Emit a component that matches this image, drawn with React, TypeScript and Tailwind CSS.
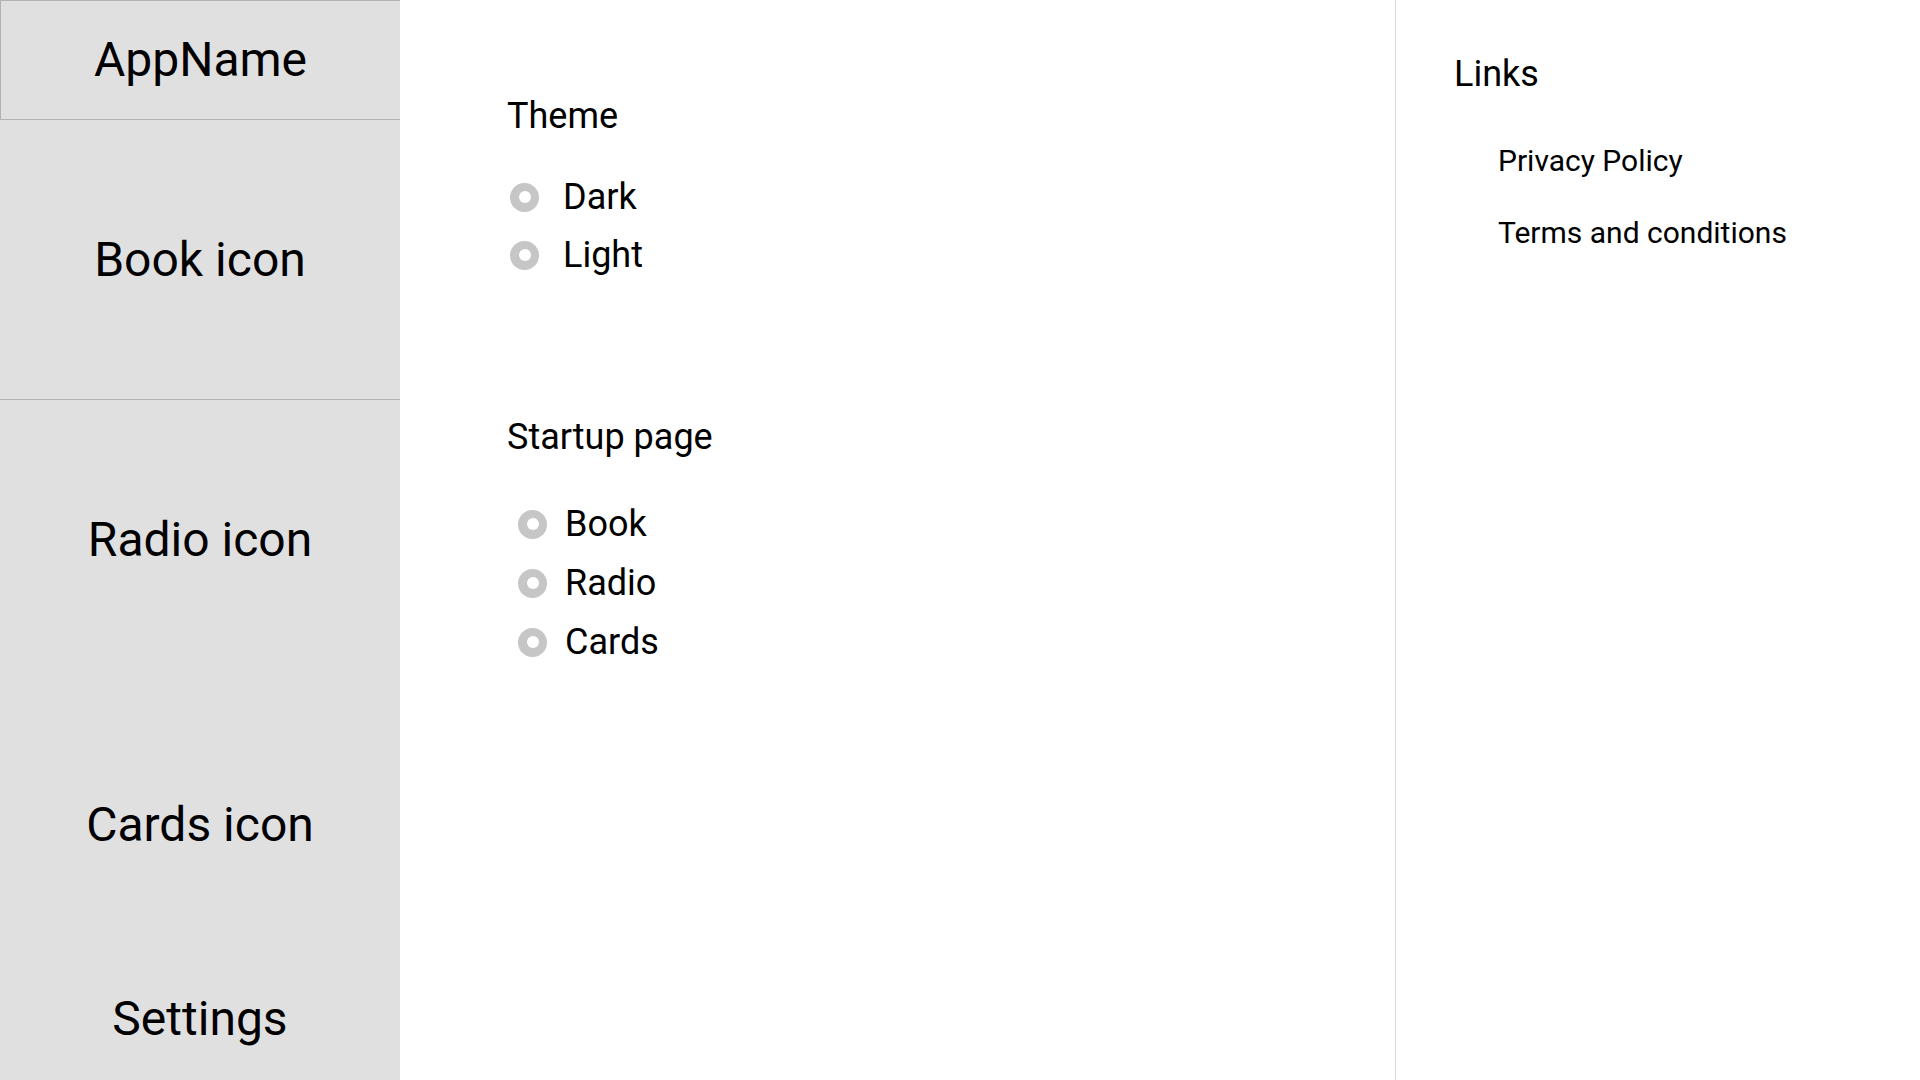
const radioCls = 'flex h-[29px] w-[29px] items-center justify-center rounded-full bg-[#c6c6c6]';

function RadioDot() {
  return (
    <span className={radioCls}>
      <span className="h-[12px] w-[12px] rounded-full bg-white" />
    </span>
  );
}

function Option({ label, indent, gap }: { label: string; indent: string; gap: string }) {
  return (
    <label className={`flex h-[36px] items-center ${indent}`}>
      <RadioDot />
      <span className={`${gap} text-[36px] leading-none`}>{label}</span>
    </label>
  );
}

export default function App() {
  return (
    <div className="flex h-[1080px] w-[1920px] overflow-hidden bg-white text-black font-['Roboto','Liberation_Sans',sans-serif]">
      {/* sidebar */}
      <nav className="flex w-[400px] shrink-0 flex-col bg-[#e0e0e0] text-[48px] leading-none">
        <div className="flex h-[120px] items-center justify-center border-t border-l border-b border-[#b3b3b3]">
          AppName
        </div>
        <div className="flex h-[280px] items-center justify-center border-b border-[#b3b3b3]">Book icon</div>
        <div className="flex h-[280px] items-center justify-center">Radio icon</div>
        <div className="flex h-[290px] items-center justify-center">Cards icon</div>
        <div className="flex flex-1 justify-center pt-[25px]">Settings</div>
      </nav>

      {/* settings */}
      <main className="flex-1 pl-[107px] pt-[98px]">
        <h2 className="text-[36px] font-normal leading-none">Theme</h2>
        <div className="mt-[45px] flex flex-col gap-[22px]">
          <Option label="Dark" indent="pl-[3px]" gap="ml-[24px]" />
          <Option label="Light" indent="pl-[3px]" gap="ml-[24px]" />
        </div>

        <h2 className="mt-[146px] text-[36px] font-normal leading-none">Startup page</h2>
        <div className="mt-[51px] flex flex-col gap-[23px]">
          <Option label="Book" indent="pl-[11px]" gap="ml-[18px]" />
          <Option label="Radio" indent="pl-[11px]" gap="ml-[18px]" />
          <Option label="Cards" indent="pl-[11px]" gap="ml-[18px]" />
        </div>
      </main>

      {/* links */}
      <aside className="w-[525px] shrink-0 border-l border-[#dedede] pl-[58px] pt-[56px]">
        <h2 className="text-[36px] font-normal leading-none">Links</h2>
        <ul className="mt-[54px] flex flex-col gap-[42px] pl-[44px] text-[30px] leading-none">
          <li>Privacy Policy</li>
          <li>Terms and conditions</li>
        </ul>
      </aside>
    </div>
  );
}
